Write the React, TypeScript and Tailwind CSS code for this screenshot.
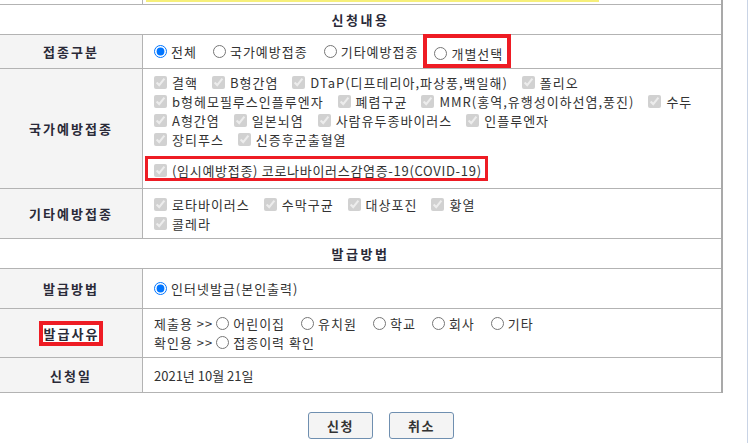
import React from 'react';

const FONT = "font-['Noto_Sans_CJK_KR','Liberation_Sans',sans-serif]";

function Radio({ label, name, checked }: { label: string; name: string; checked?: boolean }) {
  return (
    <label className="flex items-center gap-[4px]">
      <input type="radio" name={name} defaultChecked={checked} className="m-0 h-[13px] w-[13px]" />
      <span>{label}</span>
    </label>
  );
}

function Check({ label, tight }: { label: string; tight?: boolean }) {
  return (
    <label className="flex items-center gap-[5px]">
      <input type="checkbox" disabled defaultChecked className="m-0 h-[13px] w-[13px]" />
      <span className={tight ? 'tracking-[0.7px]' : ''}>{label}</span>
    </label>
  );
}

function CheckLine({ items }: { items: string[] }) {
  return (
    <div className="flex h-[19px] items-center gap-[14px]">
      {items.map((item) => (
        <Check key={item} label={item} />
      ))}
    </div>
  );
}

function Row({
  label,
  height,
  children,
}: {
  label: React.ReactNode;
  height: string;
  children: React.ReactNode;
}) {
  return (
    <div className={`flex border-b border-[#b3b3b3] ${height}`}>
      <div className="flex w-[143px] shrink-0 items-center justify-center border-r border-[#b3b3b3] bg-[#f4f4f4] text-[13px] font-bold tracking-[2px] text-[#2a2a38]">
        {label}
      </div>
      <div className="flex flex-1 flex-col justify-center pl-[11px] tracking-[1px]">{children}</div>
    </div>
  );
}

function Header({ title }: { title: string }) {
  return (
    <div className="flex h-[30px] items-center justify-center border-b border-[#b3b3b3] text-[13px] font-bold tracking-[2.5px] text-[#2a2a38]">
      {title}
    </div>
  );
}

export default function App() {
  return (
    <div className={`flex h-[443px] w-full overflow-hidden bg-white text-[13px] leading-[19px] text-[#333] ${FONT}`}>
      <div className="flex w-[748px] shrink-0 flex-col border-r border-[#c9d4e6]">
        <div className="w-[723px] border-r-2 border-[#a9a9a9]">
          {/* previous row, cut off */}
          <div className="flex h-[5px] border-b border-[#b3b3b3]">
            <div className="w-[143px] border-r border-[#b3b3b3]" />
            <div className="flex-1 pl-[3px]">
              <div className="h-[2px] w-[453px] bg-[#f6ef7a]" />
            </div>
          </div>

          <Header title="신청내용" />

          <Row label="접종구분" height="h-[34px]">
            <div className="flex items-center gap-[16px]">
              <Radio name="kind" label="전체" checked />
              <Radio name="kind" label="국가예방접종" />
              <Radio name="kind" label="기타예방접종" />
              <div className="-mt-[2px] -ml-[11px] flex h-[34px] items-center self-start border-4 border-[#ee1c24] pt-[6px] pr-[4px] pl-[7px]">
                <Radio name="kind" label="개별선택" />
              </div>
            </div>
          </Row>

          <Row label="국가예방접종" height="h-[120px]">
            <div className="flex h-full flex-col pt-[4px]">
              <CheckLine items={['결핵', 'B형간염', 'DTaP(디프테리아,파상풍,백일해)', '폴리오']} />
              <CheckLine items={['b형헤모필루스인플루엔자', '폐렴구균', 'MMR(홍역,유행성이하선염,풍진)', '수두']} />
              <CheckLine items={['A형간염', '일본뇌염', '사람유두종바이러스', '인플루엔자']} />
              <CheckLine items={['장티푸스', '신증후군출혈열']} />
              <div className="-ml-[9px] mt-[7px] flex h-[25px] items-center self-start border-[3px] border-[#ee1c24] pt-[3px] pr-[3px] pl-[6px]">
                <Check label="(임시예방접종) 코로나바이러스감염증-19(COVID-19)" tight />
              </div>
            </div>
          </Row>

          <Row label="기타예방접종" height="h-[50px]">
            <CheckLine items={['로타바이러스', '수막구균', '대상포진', '황열']} />
            <CheckLine items={['콜레라']} />
          </Row>

          <Header title="발급방법" />

          <Row label="발급방법" height="h-[40px]">
            <div className="flex">
              <Radio name="method" label="인터넷발급(본인출력)" checked />
            </div>
          </Row>

          <Row
            label={
              <span className="border-4 border-[#ee1c24] bg-white pl-[1px] leading-[17px]">발급사유</span>
            }
            height="h-[49px]"
          >
            <div className="flex h-[19px] items-center gap-[16px]">
              <span className="-mr-[13px]">제출용 &gt;&gt;</span>
              <Radio name="reason" label="어린이집" />
              <Radio name="reason" label="유치원" />
              <Radio name="reason" label="학교" />
              <Radio name="reason" label="회사" />
              <Radio name="reason" label="기타" />
            </div>
            <div className="flex h-[19px] items-center gap-[3px]">
              <span>확인용 &gt;&gt;</span>
              <Radio name="reason" label="접종이력 확인" />
            </div>
          </Row>

          <Row label="신청일" height="h-[35px]">
            <span className="tracking-normal">2021년 10월 21일</span>
          </Row>
        </div>

        <div className="mt-[19px] flex justify-center gap-[16px] pl-[15px]">
          <button className="h-[27px] w-[65px] rounded-[3px] border border-[#6f8fb0] bg-[#f4f4f4] text-[13px] font-bold tracking-[1.5px] text-[#333]">
            신청
          </button>
          <button className="h-[27px] w-[65px] rounded-[3px] border border-[#6f8fb0] bg-[#f4f4f4] text-[13px] font-bold tracking-[1.5px] text-[#333]">
            취소
          </button>
        </div>
      </div>
    </div>
  );
}
